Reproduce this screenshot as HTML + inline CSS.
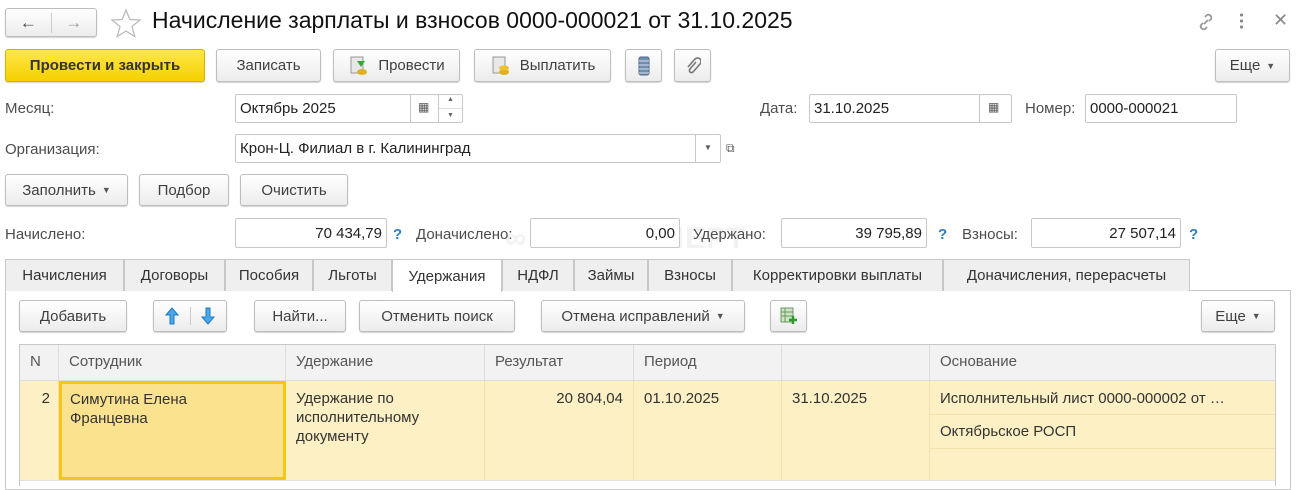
<!DOCTYPE html>
<html><head><meta charset="utf-8"><style>
*{box-sizing:border-box;margin:0;padding:0}
body{width:1296px;height:486px;background:#fff;font-family:"Liberation Sans",Arial,sans-serif;font-size:15px;color:#333;position:relative;overflow:hidden}
.a{position:absolute}
.btn{position:absolute;border:1px solid #bdbdbd;border-radius:3px;background:linear-gradient(#fff,#ececec);box-shadow:0 1px 1px rgba(0,0,0,.18);display:flex;align-items:center;justify-content:center;color:#404040;white-space:nowrap}
.inp{position:absolute;border:1px solid #c8c8c8;border-radius:2px;background:#fff;display:flex;align-items:center;padding:0 4px;color:#222;white-space:nowrap}
.lbl{position:absolute;color:#4d4d4d;white-space:nowrap}
.q{position:absolute;color:#2a7fc1;font-weight:bold}
.tab{position:absolute;top:259px;height:32px;border:1px solid #c8c8c8;border-bottom:none;background:#efefef;display:flex;align-items:center;justify-content:center;color:#333}
.th{position:absolute;top:345px;height:35px;background:#f2f2f2;border-right:1px solid #dcdcdc;padding:8px 10px;color:#555}
.td{position:absolute;top:381px;height:99px;border-right:1px solid #f0e2ad;padding:8px 10px;color:#333;line-height:19px}
.dd{font-size:9px;margin-left:6px;color:#555}
</style></head><body>
<!-- nav -->
<div class="btn" style="left:5px;top:8px;width:92px;height:29px;padding:0"><span style="flex:1;text-align:center;border-right:1px solid #ccc;font-weight:bold;color:#444;font-size:17px">←</span><span style="flex:1;text-align:center;color:#999;font-weight:bold;font-size:17px">→</span></div>
<svg class="a" style="left:110px;top:8px" width="32" height="30" viewBox="0 0 32 30"><polygon points="16,2 19.8,11.5 30,12 22,18.5 24.8,28.5 16,23 7.2,28.5 10,18.5 2,12 12.2,11.5" fill="none" stroke="#bbb" stroke-width="1.3"/></svg>
<div class="a" style="left:152px;top:7px;font-size:23px;color:#111;white-space:nowrap">Начисление зарплаты и взносов 0000-000021 от 31.10.2025</div>
<svg class="a" style="left:1196px;top:12px" width="20" height="20" viewBox="0 0 20 20"><g fill="none" stroke="#999" stroke-width="1.8"><path d="M8 12l4-4"/><path d="M9 5l2-2a3 3 0 014 4l-2 2"/><path d="M11 15l-2 2a3 3 0 01-4-4l2-2"/></g></svg>
<div class="a" style="left:1240px;top:12px;width:3px;height:18px;background:radial-gradient(circle,#888 1.5px,transparent 1.6px) 0 0/3px 6px"></div>
<div class="a" style="left:1273px;top:10px;font-size:18px;color:#888">✕</div>
<!-- toolbar -->
<div class="btn" style="left:5px;top:49px;width:200px;height:33px;background:linear-gradient(#ffe84a,#f4d000);border-color:#d4b400;font-weight:bold;color:#333">Провести и закрыть</div>
<div class="btn" style="left:216px;top:49px;width:105px;height:33px">Записать</div>
<div class="btn" style="left:333px;top:49px;width:127px;height:33px"><svg width="22" height="22" style="margin-right:8px"><rect x="3" y="2" width="12" height="16" fill="#e8e8e8" stroke="#999"/><path d="M9 6h8l-4 6z" fill="#3a3"/><ellipse cx="14" cy="17" rx="5" ry="3" fill="#e0b020"/></svg>Провести</div>
<div class="btn" style="left:474px;top:49px;width:137px;height:33px"><svg width="22" height="22" style="margin-right:8px"><rect x="3" y="2" width="12" height="16" fill="#e8e8e8" stroke="#999"/><ellipse cx="14" cy="17" rx="5" ry="3" fill="#e0b020"/><ellipse cx="14" cy="13" rx="5" ry="2.5" fill="#f0c030"/></svg>Выплатить</div>
<div class="btn" style="left:625px;top:49px;width:37px;height:33px"><svg width="12" height="20"><rect x="1" y="1" width="10" height="18" rx="2" fill="#6f8fb0" stroke="#4a6a8a"/><path d="M1 5h10M1 9h10M1 13h10M1 17h10" stroke="#dde"/></svg></div>
<div class="btn" style="left:674px;top:49px;width:37px;height:33px"><svg width="16" height="18"><path d="M11 5l-6 7a2 2 0 003 3l7-8a3.5 3.5 0 00-5-5l-7 8" fill="none" stroke="#777" stroke-width="1.6"/></svg></div>
<div class="btn" style="left:1215px;top:49px;width:75px;height:33px">Еще<span class="dd">▼</span></div>
<!-- row month -->
<div class="lbl" style="left:5px;top:100px">Месяц:</div>
<div class="inp" style="left:235px;top:94px;width:228px;height:29px">Октябрь 2025</div>
<div class="a" style="left:410px;top:94px;width:1px;height:29px;background:#c8c8c8"></div>
<div class="a" style="left:418px;top:100px;font-size:12px;color:#555">▦</div>
<div class="a" style="left:438px;top:94px;width:1px;height:29px;background:#c8c8c8"></div>
<div class="a" style="left:447px;top:96px;font-size:7px;color:#666">▲</div><div class="a" style="left:447px;top:112px;font-size:7px;color:#666">▼</div>
<div class="a" style="left:439px;top:108px;width:23px;height:1px;background:#ddd"></div>
<div class="lbl" style="left:760px;top:100px">Дата:</div>
<div class="inp" style="left:809px;top:94px;width:203px;height:29px">31.10.2025</div>
<div class="a" style="left:979px;top:94px;width:1px;height:29px;background:#c8c8c8"></div>
<div class="a" style="left:988px;top:100px;font-size:12px;color:#555">▦</div>
<div class="lbl" style="left:1025px;top:100px">Номер:</div>
<div class="inp" style="left:1085px;top:94px;width:152px;height:29px">0000-000021</div>
<!-- org -->
<div class="lbl" style="left:5px;top:141px">Организация:</div>
<div class="inp" style="left:235px;top:134px;width:486px;height:29px">Крон-Ц. Филиал в г. Калининград</div>
<div class="a" style="left:695px;top:134px;width:1px;height:29px;background:#c8c8c8"></div>
<div class="a" style="left:704px;top:143px;font-size:8px;color:#555">▼</div>
<div class="a" style="left:726px;top:141px;font-size:12px;color:#555">⧉</div>
<!-- fill -->
<div class="btn" style="left:5px;top:174px;width:123px;height:32px">Заполнить<span class="dd">▼</span></div>
<div class="btn" style="left:139px;top:174px;width:90px;height:32px">Подбор</div>
<div class="btn" style="left:240px;top:174px;width:108px;height:32px">Очистить</div>
<!-- totals -->
<div class="a" style="left:505px;top:222px;font-size:30px;font-weight:bold;color:#f2f2f2;letter-spacing:1px">∞ БУХЭКСПЕРТ</div>
<div class="lbl" style="left:5px;top:226px">Начислено:</div>
<div class="inp" style="left:235px;top:218px;width:152px;height:30px;justify-content:flex-end">70 434,79</div>
<div class="q" style="left:393px;top:226px">?</div>
<div class="lbl" style="left:416px;top:226px">Доначислено:</div>
<div class="inp" style="left:530px;top:218px;width:150px;height:30px;justify-content:flex-end">0,00</div>
<div class="lbl" style="left:693px;top:226px">Удержано:</div>
<div class="inp" style="left:781px;top:218px;width:146px;height:30px;justify-content:flex-end">39 795,89</div>
<div class="q" style="left:938px;top:226px">?</div>
<div class="lbl" style="left:962px;top:226px">Взносы:</div>
<div class="inp" style="left:1031px;top:218px;width:150px;height:30px;justify-content:flex-end">27 507,14</div>
<div class="q" style="left:1189px;top:226px">?</div>
<!-- tabs -->
<div class="a" style="left:5px;top:290px;width:1286px;height:200px;border:1px solid #c8c8c8;background:#fff"></div>
<div class="tab" style="left:5px;width:119px">Начисления</div>
<div class="tab" style="left:124px;width:101px">Договоры</div>
<div class="tab" style="left:225px;width:88px">Пособия</div>
<div class="tab" style="left:313px;width:79px">Льготы</div>
<div class="tab" style="left:392px;width:110px;background:#fff;height:33px">Удержания</div>
<div class="tab" style="left:502px;width:72px">НДФЛ</div>
<div class="tab" style="left:574px;width:74px">Займы</div>
<div class="tab" style="left:648px;width:84px">Взносы</div>
<div class="tab" style="left:732px;width:211px">Корректировки выплаты</div>
<div class="tab" style="left:943px;width:247px">Доначисления, перерасчеты</div>
<!-- inner toolbar -->
<div class="btn" style="left:19px;top:300px;width:108px;height:32px">Добавить</div>
<div class="btn" style="left:153px;top:300px;width:74px;height:32px;padding:0"><span style="flex:1;display:flex;justify-content:center;border-right:1px solid #ccc"><svg width="14" height="18"><path d="M7 1L1 8h4v9h4V8h4z" fill="#4aa8e8" stroke="#1e78c0"/></svg></span><span style="flex:1;display:flex;justify-content:center"><svg width="14" height="18"><path d="M7 17L1 10h4V1h4v9h4z" fill="#4aa8e8" stroke="#1e78c0"/></svg></span></div>
<div class="btn" style="left:254px;top:300px;width:92px;height:32px">Найти...</div>
<div class="btn" style="left:359px;top:300px;width:156px;height:32px">Отменить поиск</div>
<div class="btn" style="left:541px;top:300px;width:204px;height:32px">Отмена исправлений<span class="dd">▼</span></div>
<div class="btn" style="left:770px;top:300px;width:37px;height:32px"><svg width="18" height="18"><rect x="1" y="1" width="12" height="14" fill="#cfe3c8" stroke="#6a9a60"/><path d="M1 5h12M1 9h12M5 1v14" stroke="#6a9a60"/><path d="M13 9v8M9 13h8" stroke="#2c9a2c" stroke-width="2.5"/></svg></div>
<div class="btn" style="left:1201px;top:300px;width:74px;height:32px">Еще<span class="dd">▼</span></div>
<!-- table -->
<div class="a" style="left:19px;top:344px;width:1257px;height:142px;border:1px solid #c8c8c8;border-bottom:none;background:#fff"></div>
<div class="th" style="left:20px;width:39px;padding-left:10px">N</div>
<div class="th" style="left:59px;width:227px">Сотрудник</div>
<div class="th" style="left:286px;width:199px">Удержание</div>
<div class="th" style="left:485px;width:149px">Результат</div>
<div class="th" style="left:634px;width:148px">Период</div>
<div class="th" style="left:782px;width:148px"></div>
<div class="th" style="left:930px;width:345px;border-right:none">Основание</div>
<div class="a" style="left:20px;top:380px;width:1255px;height:1px;background:#dcdcdc"></div>
<div class="td" style="left:20px;width:39px;background:#fcf0c4;text-align:right;padding-right:8px">2</div>
<div class="td" style="left:59px;width:227px;background:#fbe28f;border:3px solid #f6c51a;padding:6px 8px">Симутина Елена<br>Францевна</div>
<div class="td" style="left:286px;width:199px;background:#fcf0c4">Удержание по исполнительному документу</div>
<div class="td" style="left:485px;width:149px;background:#fcf0c4;text-align:right">20 804,04</div>
<div class="td" style="left:634px;width:148px;background:#fcf0c4">01.10.2025</div>
<div class="td" style="left:782px;width:148px;background:#fcf0c4">31.10.2025</div>
<div class="td" style="left:930px;width:345px;background:#fcf0c4;border-right:none;padding:0">
<div style="height:34px;border-bottom:1px solid #f0e2ad;padding:8px 10px;white-space:nowrap">Исполнительный лист 0000-000002 от …</div>
<div style="height:34px;border-bottom:1px solid #f0e2ad;padding:7px 10px">Октябрьское РОСП</div>
</div>
<div class="a" style="left:20px;top:480px;width:1255px;height:1px;background:#e4e4e4"></div>
</body></html>
